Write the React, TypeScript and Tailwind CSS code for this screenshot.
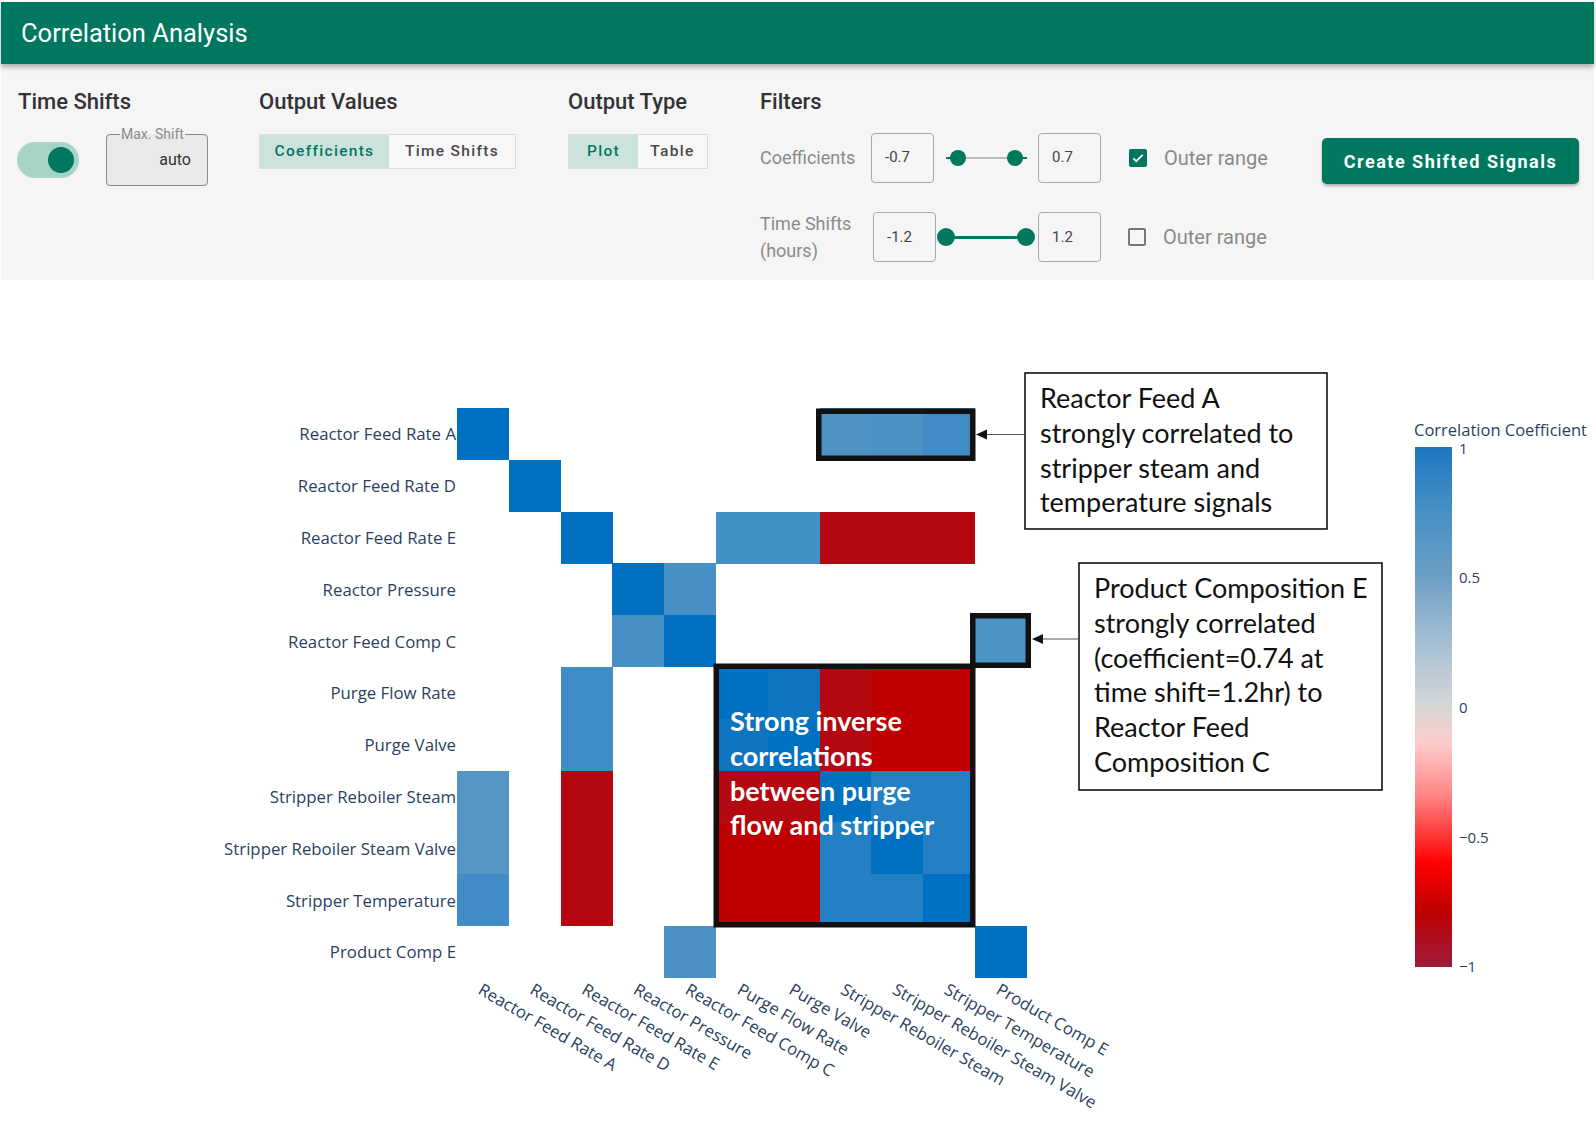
const NAMES = [
  "Reactor Feed Rate A",
  "Reactor Feed Rate D",
  "Reactor Feed Rate E",
  "Reactor Pressure",
  "Reactor Feed Comp C",
  "Purge Flow Rate",
  "Purge Valve",
  "Stripper Reboiler Steam",
  "Stripper Reboiler Steam Valve",
  "Stripper Temperature",
  "Product Comp E",
];

const DB = "#0070c0";
const MB = "#4690c6";
const SB = "#2380c4";
const R = "#c00000";
const DR = "#b5070f";

// [row, col, colour]
const CELLS: [number, number, string][] = [
  [0, 0, DB], [0, 7, "#4d93c6"], [0, 8, "#4a91c5"], [0, 9, "#3f8cc6"],
  [1, 1, DB],
  [2, 2, DB], [2, 5, "#4190c8"], [2, 6, "#4190c8"], [2, 7, DR], [2, 8, DR], [2, 9, DR],
  [3, 3, DB], [3, 4, MB],
  [4, 3, MB], [4, 4, DB], [4, 10, "#4a94c6"],
  [5, 2, "#3f8dc7"], [5, 5, DB], [5, 6, "#0f74c0"], [5, 7, DR], [5, 8, R], [5, 9, R],
  [6, 2, "#3f8dc7"], [6, 5, "#0f74c0"], [6, 6, DB], [6, 7, DR], [6, 8, R], [6, 9, R],
  [7, 0, "#5596c7"], [7, 2, DR], [7, 5, DR], [7, 6, DR], [7, 7, DB], [7, 8, SB], [7, 9, SB],
  [8, 0, "#5596c7"], [8, 2, DR], [8, 5, R], [8, 6, R], [8, 7, SB], [8, 8, DB], [8, 9, SB],
  [9, 0, "#418cc6"], [9, 2, DR], [9, 5, R], [9, 6, R], [9, 7, SB], [9, 8, SB], [9, 9, DB],
  [10, 4, "#4a90c4"], [10, 10, DB],
];

const X0 = 456;
const Y0 = 408;
const C = 51.8;

function Heading({ children }: { children: string }) {
  return <h2 className="text-[22px] leading-[28px] font-medium text-[#333]">{children}</h2>;
}

function NumBox({ value }: { value: string }) {
  return (
    <div className="w-[63px] h-[50px] border border-[#a8a8a8] rounded-[4px] flex items-center pl-[13px] text-[15px] text-[#444]">
      {value}
    </div>
  );
}

function Check({ on }: { on: boolean }) {
  if (on) {
    return (
      <div className="w-[18px] h-[18px] rounded-[2px] bg-[#00785f] flex items-center justify-center">
        <svg width="14" height="14" viewBox="0 0 24 24">
          <path d="M4 12.5l5 5L20 6.5" fill="none" stroke="white" strokeWidth="3" />
        </svg>
      </div>
    );
  }
  return <div className="w-[18px] h-[18px] rounded-[2px] border-2 border-[#777]" />;
}

function Controls() {
  return (
    <div className="h-[216px] bg-[#f5f5f5] flex pl-[17px] pr-[15px] pt-[24px] font-['Roboto',sans-serif]">
      <div className="w-[241px]">
        <Heading>Time Shifts</Heading>
        <div className="flex items-center mt-[11px]">
          <div className="mt-[5px] w-[62px] h-[36px] rounded-full bg-[#a7d4c7] flex items-center justify-end pr-[5px] -ml-[1px]">
            <div className="w-[26px] h-[26px] rounded-full bg-[#00785f]" />
          </div>
          <fieldset className="ml-[27px] w-[102px] h-[60px] border border-[#8a8a8a] rounded-[4px] bg-[#e9e9e9] px-[12px] relative -top-[1px]">
            <legend className="text-[14px] leading-[16px] text-[#8a8a8a] px-[1px] ml-[1px]">Max. Shift</legend>
            <div className="text-right text-[16px] text-[#333] pr-[4px] pt-[6px]">auto</div>
          </fieldset>
        </div>
      </div>

      <div className="w-[309px]">
        <Heading>Output Values</Heading>
        <div className="mt-[18px] flex w-[257px] h-[35px] border border-[#dcdcdc] text-[15.5px] font-medium tracking-[1.3px]">
          <div className="w-[129px] bg-[#cce3dd] text-[#00785f] flex items-center justify-center">Coefficients</div>
          <div className="flex-1 bg-[#f7f7f7] text-[#4a4a4a] flex items-center justify-center">Time Shifts</div>
        </div>
      </div>

      <div className="w-[192px]">
        <Heading>Output Type</Heading>
        <div className="mt-[18px] flex w-[140px] h-[35px] border border-[#dcdcdc] text-[15.5px] font-medium tracking-[1.3px]">
          <div className="w-[69px] bg-[#cce3dd] text-[#00785f] flex items-center justify-center">Plot</div>
          <div className="flex-1 bg-[#f7f7f7] text-[#4a4a4a] flex items-center justify-center">Table</div>
        </div>
      </div>

      <div className="flex-1">
        <Heading>Filters</Heading>
        <div className="mt-[15px] flex items-center">
          <div className="w-[111px] text-[18px] text-[#8a8a8a]">Coefficients</div>
          <NumBox value="-0.7" />
          <div className="ml-[12px] w-[81px] h-[16px] relative flex items-center">
            <div className="absolute left-0 right-0 h-[2px] bg-[#00785f]" />
            <div className="absolute left-[12px] right-[12px] h-[2px] bg-[#bdbdbd]" />
            <div className="absolute left-[4px] w-[16px] h-[16px] rounded-full bg-[#00785f]" />
            <div className="absolute right-[4px] w-[16px] h-[16px] rounded-full bg-[#00785f]" />
          </div>
          <div className="ml-[11px]">
            <NumBox value="0.7" />
          </div>
          <div className="ml-[28px]">
            <Check on />
          </div>
          <div className="ml-[17px] text-[20px] text-[#8a8a8a]">Outer range</div>
          <button className="ml-auto self-start mt-[7px] w-[257px] h-[46px] rounded-[5px] bg-[#00785f] text-white text-[18px] font-bold tracking-[1.5px] shadow-[0_2px_3px_rgba(0,0,0,0.3)]">
            Create Shifted Signals
          </button>
        </div>
        <div className="mt-[26px] flex items-center">
          <div className="w-[113px] text-[18px] leading-[27px] text-[#8a8a8a]">
            Time Shifts
            <br />
            (hours)
          </div>
          <NumBox value="-1.2" />
          <div className="ml-[1px] w-[98px] h-[18px] relative flex items-center">
            <div className="absolute left-[9px] right-[9px] h-[3px] bg-[#00785f]" />
            <div className="absolute left-0 w-[18px] h-[18px] rounded-full bg-[#00785f]" />
            <div className="absolute right-0 w-[18px] h-[18px] rounded-full bg-[#00785f]" />
          </div>
          <div className="ml-[3px]">
            <NumBox value="1.2" />
          </div>
          <div className="ml-[27px]">
            <Check on={false} />
          </div>
          <div className="ml-[17px] text-[20px] text-[#8a8a8a]">Outer range</div>
        </div>
      </div>
    </div>
  );
}

function Note({ x, y, w, h, lines }: { x: number; y: number; w: number; h: number; lines: string[] }) {
  return (
    <g>
      <rect x={x} y={y} width={w} height={h} fill="white" stroke="#111" strokeWidth="1.6" />
      <text fontFamily="Lato, sans-serif" fontSize="27" fill="#111">
        {lines.map((l, i) => (
          <tspan key={i} x={x + 15} y={y + 35 + i * 34.8}>
            {l}
          </tspan>
        ))}
      </text>
    </g>
  );
}

function Plot() {
  const tick = "#2a3f5f";
  return (
    <svg width="1596" height="843" viewBox="0 280 1596 843" className="block">
      <defs>
        <linearGradient id="cbar" x1="0" y1="0" x2="0" y2="1">
          <stop offset="0%" stopColor="#1f77c0" />
          <stop offset="12.5%" stopColor="#4690c5" />
          <stop offset="25%" stopColor="#6d9fc5" />
          <stop offset="37.5%" stopColor="#a5bfd4" />
          <stop offset="50%" stopColor="#d6d6d6" />
          <stop offset="57%" stopColor="#ffcccc" />
          <stop offset="67.5%" stopColor="#ff8080" />
          <stop offset="80%" stopColor="#ff0000" />
          <stop offset="89%" stopColor="#c00000" />
          <stop offset="100%" stopColor="#9e1b3c" />
        </linearGradient>
      </defs>

      <g shapeRendering="crispEdges">
        {CELLS.map(([r, c, col]) => (
          <rect key={`${r}-${c}`} x={X0 + c * C} y={Y0 + r * C} width={C + 0.4} height={C + 0.4} fill={col} />
        ))}
      </g>

      <g fontFamily="'Open Sans', sans-serif" fontSize="16.8" fill={tick}>
        {NAMES.map((n, i) => (
          <text key={n} x={X0 - 1} y={Y0 + (i + 0.5) * C} textAnchor="end" dominantBaseline="central">
            {n}
          </text>
        ))}
        {NAMES.map((n, i) => {
          const x = X0 + (i + 0.5) * C - 6;
          const y = 993;
          return (
            <text key={"x" + n} x={x} y={y} transform={`rotate(30 ${x} ${y})`}>
              {n}
            </text>
          );
        })}
      </g>

      {/* highlight boxes */}
      <g fill="none" stroke="#111" strokeWidth="5.5">
        <rect x={817.75} y={411.25} width={154} height={47} />
        <rect x={971.75} y={615.75} width={55.5} height={49.5} />
        <rect x={715.25} y={666.25} width={256.5} height={258.5} />
      </g>

      <text fontFamily="Lato, sans-serif" fontWeight="700" fontSize="27" fill="white">
        {["Strong inverse", "correlations", "between purge", "flow and stripper"].map((l, i) => (
          <tspan key={l} x={729} y={731 + i * 34.8}>
            {l}
          </tspan>
        ))}
      </text>

      <Note
        x={1024}
        y={373}
        w={302}
        h={156}
        lines={["Reactor Feed A", "strongly correlated to", "stripper steam and", "temperature signals"]}
      />
      <Note
        x={1078}
        y={563}
        w={303}
        h={227}
        lines={[
          "Product Composition E",
          "strongly correlated",
          "(coefficient=0.74 at",
          "time shift=1.2hr) to",
          "Reactor Feed",
          "Composition C",
        ]}
      />

      {/* arrows */}
      <line x1="1024" y1="434.5" x2="984" y2="434.5" stroke="#555" strokeWidth="1.2" />
      <polygon points="975,434.5 986,429.5 986,439.5" fill="#111" />
      <line x1="1078" y1="639" x2="1040" y2="639" stroke="#555" strokeWidth="1.2" />
      <polygon points="1031,639 1042,634 1042,644" fill="#111" />

      {/* colour bar */}
      <rect x="1414" y="447" width="37" height="520" fill="url(#cbar)" />
      <g fontFamily="'Open Sans', sans-serif" fontSize="15" fill={tick} dominantBaseline="central">
        <text x="1413" y="429" fontSize="16.5">Correlation Coefficient</text>
        <text x="1458" y="448">1</text>
        <text x="1458" y="577">0.5</text>
        <text x="1458" y="707">0</text>
        <text x="1458" y="837">−0.5</text>
        <text x="1458" y="966">−1</text>
      </g>
    </svg>
  );
}

export default function App() {
  return (
    <div className="w-[1596px] h-[1125px] bg-white overflow-hidden pl-[1px] pr-[2px] pt-[2px]">
      <div className="h-[62px] bg-[#00785f] flex items-center pl-[20px] shadow-[0_3px_5px_rgba(0,0,0,0.3)] relative z-10 font-['Roboto',sans-serif]">
        <h1 className="text-[25.5px] text-white">Correlation Analysis</h1>
      </div>
      <Controls />
      <Plot />
    </div>
  );
}
